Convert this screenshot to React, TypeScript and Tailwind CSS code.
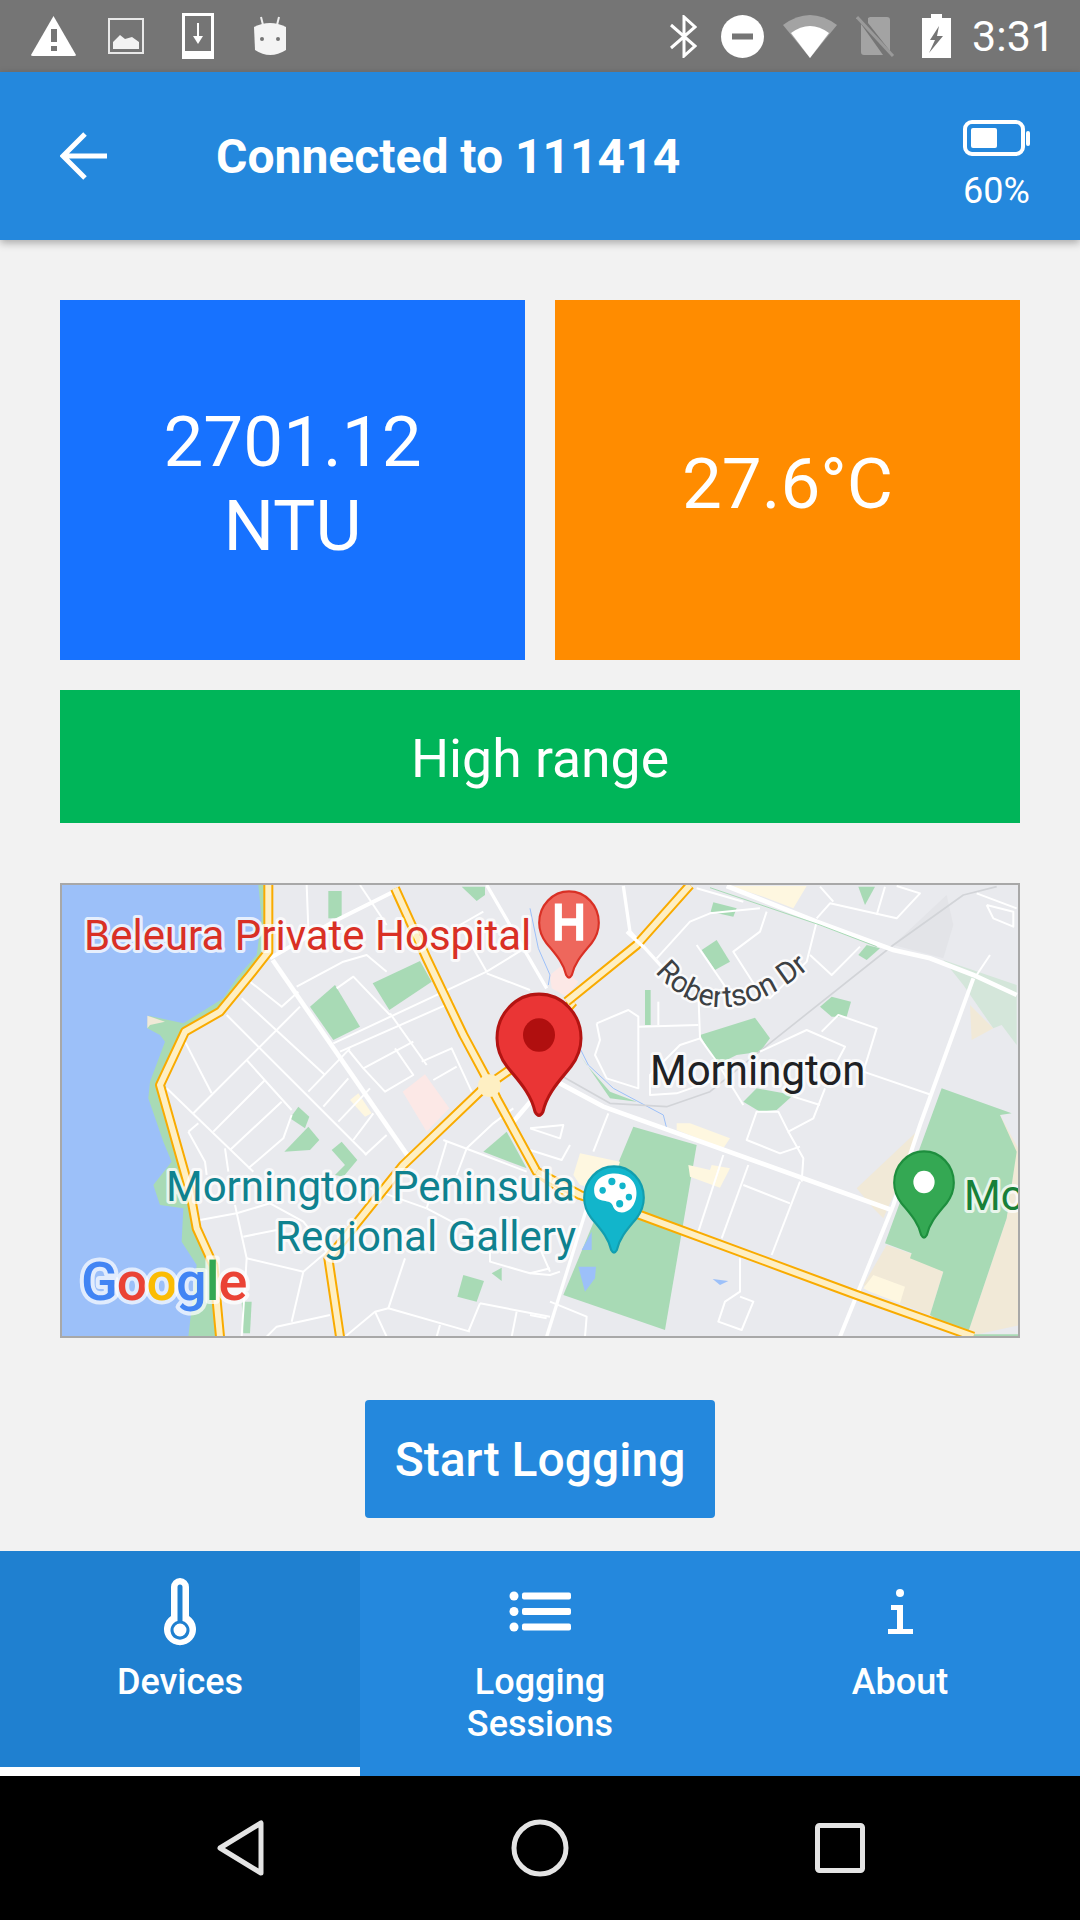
import React from "react";

const thinLeft = [
  "770,30 775,160", "930,30 1010,150", "600,320 695,395 745,350", "575,370 825,600", "530,420 950,840",
  "350,640 610,890", "405,500 485,655", "430,715 750,395", "490,770 645,615", "590,555 725,705",
  "540,825 695,680", "415,770 445,745", "415,770 465,860 470,900", "595,880 700,790 725,720", "525,820 535,890",
  "850,505 1310,290 1440,210", "870,530 1210,380", "895,525 940,580 1090,500", "940,580 1005,650 1090,600 1035,520",
  "1020,415 1130,570", "1115,560 1205,520 1265,650", "1150,615 1220,575", "860,340 910,305 1020,420",
  "740,335 880,260 950,240 1010,290", "1310,295 1440,345", "775,650 900,520", "820,695 895,610", "865,740 960,640",
  "910,795 970,715", "945,840 1010,780", "1180,795 1300,840 1430,890", "1250,820 1330,745 1390,700",
  "450,1035 560,1015 660,985", "580,1085 680,1065", "555,990 590,1150 575,1385", "590,1150 760,1190",
  "725,1340 760,1190 830,1130", "1065,1150 1015,1300", "885,1385 975,1310 1015,1300 1260,1370", "975,1310 1010,1385",
  "650,1385 680,1355 840,1320", "1320,1100 1320,1160 1440,1195 1500,1180", "1290,1285 1255,1370", "1290,1285 1500,1325",
  "1160,1385 1170,1350", "1400,1310 1385,1385", "1190,800 1130,1000", "1250,820 1220,900", "1300,110 1230,150 1310,290",
  "660,985 760,1040 830,1130", "1130,1000 1320,1100", "960,940 1130,1000",
];

const thinRight = [
  "380,250 480,140 540,115 690,100", "500,40 640,80", "710,110 690,170 610,230 680,340 720,370 830,260 860,140",
  "500,210 610,370", "840,240 905,300 990,215", "860,130 900,85 1100,130 1170,55 1100,33", "1040,120 1065,35", "870,35 910,80",
  "200,445 295,405 325,425 325,640 230,610 195,540 210,495 200,445", "325,455 505,450", "385,380 385,450",
  "505,350 510,490 450,510 360,600 360,660 440,655 540,620", "510,490 560,560 640,690",
  "875,470 925,420 1040,460 1000,590 1205,660", "690,530 830,465 945,515 900,600", "885,640 850,730 775,770 745,710 680,710 650,795 750,835 810,815",
  "775,770 820,850 815,920", "790,665 870,690", "235,715 190,830", "0,760 100,750 90,790 0,760", "120,810 95,855 0,825",
  "655,870 575,1090", "580,840 505,1070", "640,930 780,985", "810,920 725,1140", "630,1150 630,1250 585,1280 565,1340 635,1365 670,1280 630,1265",
  "1370,90 1450,110 1450,155 1390,130 1370,90", "1340,55 1460,100", "1380,240 1340,300", "0,1195 60,1200 90,1190", "60,1190 30,1120",
  "60,1280 170,1325 165,1385", "0,1320 50,1330",
];

const wideLeft: [string, number][] = [
  ["668,255 1075,845", 14], ["660,250 850,140 1030,50", 12], ["1310,30 1490,340", 10], ["1390,740 1450,670", 14],
];

const wideRight: [string, number][] = [
  ["590,33 860,140 1090,225 1200,250 1330,300 1460,360", 14], ["80,620 220,695 1085,1005", 14], ["280,33 300,170 400,280", 10],
  ["1330,310 1170,750 1090,990 930,1385", 12], ["170,1000 50,1385", 10],
];

const greensLeft = [
  "835,48 875,48 875,130 835,130", "780,395 855,330 930,455 850,495", "968,325 1110,258 1145,320 1018,405", "1235,35 1305,35 1305,60 1280,78",
  "720,730 745,695 778,725 765,760", "703,830 775,755 808,795 780,825", "845,825 875,800 922,855 880,905 855,900 885,870", "1300,830 1370,770 1430,880",
  "1222,1265 1240,1200 1302,1218 1280,1280", "1325,1195 1355,1178 1355,1218", "575,1280 605,1280 600,1375 580,1375",
];

const greensRight = [
  "510,480 675,428 720,490 690,530 620,540 560,570", "640,680 680,640 790,660 740,705 690,710", "515,225 560,195 600,260 555,285",
  "542,110 550,82 620,100 610,125", "985,35 1035,35 1005,90", "870,395 905,365 963,380 950,425 905,425", "345,345 362,345 362,450 345,450",
  "985,240 1010,210 1050,220 1010,255", "100,1260 310,755 500,810 405,1365",
  "1065,1105 1235,640 1445,715 1410,720 1460,830 1430,1030 1310,1385 1200,1320 1240,1190 1140,1150 1145,1135",
  "150,540 240,670 320,680 240,650 170,570", "1330,1378 1465,1378 1465,1390 1330,1390",
];

const beigeRight = [
  "1320,390 1390,460 1325,495", "980,940 1160,770 1100,940 1060,1030 1030,1000", "1410,720 1470,830 1470,1350 1310,1385 1430,1030",
  "1000,1230 1070,1110 1140,1135 1240,1190 1200,1320 1100,1280",
];

const creamRight = [
  "130,900 150,835 270,860 240,950 150,930", "440,745 480,745 600,790 580,820 440,765", "475,870 540,885 545,870 600,880 570,938 480,905",
  "600,33 830,33 790,100 700,65", "1000,1240 1030,1200 1125,1235 1110,1285 1020,1250",
];

const waterRight = ["145,1175 198,1175 195,1210 165,1250", "155,1125 185,1070 185,1125", "548,1212 595,1218 570,1230"];

const arterialsLeft = [
  "655,30 655,230 600,300 510,410 405,470 330,630 420,950 440,1060 490,1170 510,1385",
  "1035,40 1130,250 1240,480 1310,610 1340,670 1460,890 1560,960",
  "870,1385 835,1150 1060,870 1300,640 1400,570 1570,380",
];

const arterialsRight = ["20,890 150,960 330,1020 980,1260 1330,1385", "110,380 320,210 480,30"];

function Lines({ items, width, color }: { items: string[]; width: number; color: string }) {
  return (
    <>
      {items.map((p, i) => (
        <polyline key={i} points={p} fill="none" stroke={color} strokeWidth={width} strokeLinejoin="round" />
      ))}
    </>
  );
}

function Shapes({ items, color }: { items: string[]; color: string }) {
  return (
    <>
      {items.map((p, i) => (
        <polygon key={i} points={p} fill={color} />
      ))}
    </>
  );
}

function Pin({ x, y, s, fill, edge, children }: { x: number; y: number; s: number; fill: string; edge: string; children?: React.ReactNode }) {
  return (
    <g transform={`translate(${x} ${y}) scale(${s} ${s * 1.05})`}>
      <path
        d="M-4 113C-8 95-22 82-32 70C-40 60-42 52-42 43A42 42 0 1 1 42 43C42 52 40 60 32 70C22 82 8 95 4 113Q0 120-4 113Z"
        fill={fill}
        stroke={edge}
        strokeWidth="3"
        transform="translate(0 1)"
      />
      {children}
    </g>
  );
}

function MapView() {
  const left = "translate(50 875) scale(0.33333)";
  const right = "translate(530 875) scale(0.33333)";
  const label = { fontFamily: "Roboto, sans-serif", paintOrder: "stroke" as const, strokeLinejoin: "round" as const };
  return (
    <svg viewBox="62 885 956 451" className="block w-full h-full bg-[#e9eaee]">
      <g transform={left}>
        <polygon fill="#a8dab5" points="620,30 660,30 660,230 590,310 520,400 405,470 345,630 400,880 440,1080 490,1180 500,1385 400,1385 300,900 280,400" />
        <polygon fill="#9cc0f9" points="0,0 622,0 635,130 620,240 560,310 520,370 400,445 295,422 292,460 330,480 345,500 300,620 295,670 340,800 365,860 310,930 330,990 400,1000 395,1100 440,1170 415,1385 0,1385" />
        <polygon fill="#f1e9d7" points="292,422 345,440 300,450 292,460" />
        <Shapes items={greensLeft} color="#a8dab5" />
        <polygon fill="#fce8e6" points="1058,650 1125,598 1198,700 1130,770" />
        <polygon fill="#fef7e0" points="900,675 925,655 965,715 945,725" />
        <Lines items={thinLeft} width={6} color="#ffffff" />
        {wideLeft.map(([p, w]) => (
          <polyline key={p} points={p} fill="none" stroke="#ffffff" strokeWidth={w} />
        ))}
      </g>
      <g transform={right}>
        <Shapes items={beigeRight} color="#f1e9d7" />
        <polygon fill="#d4e6da" points="1240,255 1460,330 1460,510 1415,450 1390,460 1300,330" />
        <Shapes items={greensRight} color="#a8dab5" />
        <polygon fill="#fce8e6" points="60,300 90,275 145,320 110,365 65,340" />
        <polygon fill="#e3e4e8" points="1250,60 1270,150 1240,250 1090,210" />
        <Shapes items={creamRight} color="#fef7e0" />
        <Shapes items={waterRight} color="#9cc0f9" />
        <Lines items={["0,100 25,220 60,300 55,330", "150,520 175,570 250,640 400,720 410,760"]} width={3} color="#9cc0f9" />
        <Lines items={["90,600 240,685 410,695 540,650 700,520 1090,210 1300,60 1400,35"]} width={5} color="#d2d4d8" />
        <Lines items={thinRight} width={6} color="#ffffff" />
        {wideRight.map(([p, w]) => (
          <polyline key={p} points={p} fill="none" stroke="#ffffff" strokeWidth={w} />
        ))}
        <Lines items={["540,38 870,150 1040,215"]} width={3} color="#a8dab5" />
      </g>
      <g transform={left}>
        <Lines items={arterialsLeft} width={30} color="#f9ab00" />
        <Lines items={arterialsLeft} width={18} color="#feefc3" />
        <circle cx="1318" cy="632" r="34" fill="#feefc3" />
      </g>
      <g transform={right}>
        <Lines items={arterialsRight} width={30} color="#f9ab00" />
        <Lines items={arterialsRight} width={18} color="#feefc3" />
        <Lines items={["290,170 340,215"]} width={10} color="#ffffff" />
      </g>

      <text x="84" y="950" fontSize="42" fill="#d93025" stroke="#ffffff" strokeOpacity="0.75" strokeWidth="6" style={label}>Beleura Private Hospital</text>
      <text x="166" y="1201" fontSize="42" fill="#0f828f" stroke="#ffffff" strokeOpacity="0.75" strokeWidth="6" style={label}>Mornington Peninsula</text>
      <text x="275" y="1251" fontSize="42" fill="#0f828f" stroke="#ffffff" strokeOpacity="0.75" strokeWidth="6" style={label}>Regional Gallery</text>
      <text x="650" y="1085" fontSize="42" fill="#202124" stroke="#ffffff" strokeOpacity="0.75" strokeWidth="6" style={label}>Mornington</text>
      <text x="964" y="1210" fontSize="42" fill="#188038" stroke="#ffffff" strokeOpacity="0.75" strokeWidth="6" style={label}>Mo</text>
      <path id="robertson" d="M655 972Q722 1050 824 955" fill="none" />
      <text fontSize="30" fill="#3c4043" stroke="#ffffff" strokeOpacity="0.8" strokeWidth="5" style={label}>
        <textPath href="#robertson">Robertson Dr</textPath>
      </text>

      <text x="81" y="1300" fontSize="54" fontWeight="500" stroke="#ffffff" strokeOpacity="0.7" strokeWidth="8" letterSpacing="-1" style={label}>
        <tspan fill="#4285f4">G</tspan>
        <tspan fill="#ea4335">o</tspan>
        <tspan fill="#fbbc04">o</tspan>
        <tspan fill="#4285f4">g</tspan>
        <tspan fill="#34a853">l</tspan>
        <tspan fill="#ea4335">e</tspan>
      </text>

      <Pin x={569} y={890} s={0.71} fill="#ee675c" edge="#d93025">
        <path d="M-20 18H-10V38H10V18H20V68H10V48H-10V68H-20Z" fill="#ffffff" />
      </Pin>
      <Pin x={614} y={1165} s={0.71} fill="#12b5cb" edge="#129eaf">
        <path d="M-28 34C-28 12 2 6 20 16C36 26 34 48 24 58C16 66 2 66-2 54C-6 44-28 54-28 34Z" fill="#ffffff" />
        <circle cx="-16" cy="34" r="4.5" fill="#12b5cb" />
        <circle cx="-3" cy="22" r="5" fill="#12b5cb" />
        <circle cx="12" cy="28" r="4.5" fill="#12b5cb" />
        <circle cx="21" cy="43" r="4.5" fill="#12b5cb" />
        <circle cx="8" cy="52" r="5" fill="#12b5cb" />
      </Pin>
      <Pin x={924} y={1150} s={0.71} fill="#34a853" edge="#1e8e3e">
        <circle cx="0" cy="43" r="15" fill="#ffffff" />
      </Pin>
      <Pin x={539} y={992} s={1} fill="#ea3535" edge="#b31412">
        <circle cx="0" cy="41" r="16" fill="#b00f0f" />
      </Pin>
    </svg>
  );
}

function StatusBar() {
  return (
    <div className="flex h-[72px] items-center bg-[#757575] pl-[31px] pr-[25px]">
      <svg width="45" height="40" viewBox="0 0 45 40">
        <path d="M22.500 0L45 39Q45 40 43 40H2Q0 40 0 39Z" fill="#ffffff" />
        <rect x="20" y="13" width="6" height="13" fill="#757575" />
        <rect x="20" y="30" width="6" height="5" fill="#757575" />
      </svg>
      <svg className="ml-[32px]" width="36" height="36" viewBox="0 0 36 36">
        <rect x="1" y="1" width="34" height="34" fill="none" stroke="#e8e8e8" strokeWidth="2" />
        <path d="M5 31V24L12 17L17 21L24 19L31 24V31Z" fill="#f2f2f2" />
      </svg>
      <svg className="ml-[38px]" width="32" height="46" viewBox="0 0 32 46">
        <path fillRule="evenodd" d="M0 0H32V46H0ZM3 3V38H29V3Z" fill="#ffffff" />
        <path d="M15 10H17V23H21L16 31L11 23H15Z" fill="#ffffff" />
      </svg>
      <svg className="ml-[39px]" width="34" height="40" viewBox="0 0 34 40">
        <path d="M8 1L10 9M26 1L24 9" stroke="#eeeeee" strokeWidth="2" />
        <path d="M1 11Q17 3 33 11V34Q17 44 2 34Z" fill="#f4f4f4" />
        <circle cx="9" cy="23" r="2" fill="#757575" />
        <circle cx="25" cy="23" r="2" fill="#757575" />
      </svg>
      <svg className="ml-auto" width="27" height="43" viewBox="0 0 27 43">
        <path d="M1 10L25 31L14 41V2L25 12L1 33" fill="none" stroke="#ffffff" strokeWidth="3" />
      </svg>
      <svg className="ml-[24px]" width="43" height="43" viewBox="0 0 43 43">
        <circle cx="21.500" cy="21.500" r="21.500" fill="#ffffff" />
        <rect x="11" y="18.500" width="21" height="6" fill="#757575" />
      </svg>
      <svg className="ml-[19px]" width="54" height="43" viewBox="0 0 54 43">
        <path d="M0 10Q27-10 54 10L27 43Z" fill="#a3a3a3" />
        <path d="M8 18Q27 4 46 18L27 43Z" fill="#ffffff" />
      </svg>
      <svg className="ml-[19px]" width="39" height="42" viewBox="0 0 39 42">
        <path d="M14 2H31Q34 2 34 5V36L12 8V3ZM5 9L27 40H8Q5 40 5 37Z" fill="#a3a3a3" />
        <path d="M1 2L37 41" stroke="#9a9a9a" strokeWidth="3" />
      </svg>
      <svg className="ml-[27px]" width="29" height="44" viewBox="0 0 29 44">
        <path fillRule="evenodd" d="M9 0H20V4H29V44H0V4H9ZM17 12L8 26H13L7 39L21 22H15Z" fill="#ffffff" />
      </svg>
      <span className="ml-[21px] text-[43px] leading-none text-white">3:31</span>
    </div>
  );
}

function Header() {
  return (
    <div className="relative z-10 flex h-[168px] items-center bg-[#2488dd] pl-[60px] pr-[50px] shadow-[0_3px_8px_rgba(0,0,0,0.3)]">
      <svg width="48" height="48" viewBox="0 0 48 48">
        <path d="M47 24H3M25 2L3 24L25 46" fill="none" stroke="#ffffff" strokeWidth="5" />
      </svg>
      <span className="ml-[108px] pt-[2px] text-[48px] font-bold text-white">Connected to 111414</span>
      <div className="ml-auto flex w-[67px] flex-col items-center self-start pt-[48px]">
        <svg width="67" height="36" viewBox="0 0 67 36">
          <rect x="2" y="2" width="58" height="32" rx="7" fill="none" stroke="#ffffff" strokeWidth="4" />
          <rect x="8" y="8" width="26" height="20" rx="2" fill="#ffffff" />
          <rect x="63" y="11" width="4" height="15" rx="2" fill="#ffffff" />
        </svg>
        <span className="mt-[12px] text-[36px] leading-[46px] text-white">60%</span>
      </div>
    </div>
  );
}

function Tab({ label, active, children }: { label: string; active?: boolean; children: React.ReactNode }) {
  return (
    <div className={active ? "flex flex-1 flex-col items-center bg-[#1f80d0] border-b-[9px] border-white" : "flex flex-1 flex-col items-center"}>
      <div className="flex h-[100px] items-end justify-center pb-[5px]">{children}</div>
      <span className="mt-[10px] w-[200px] text-center text-[36px] font-medium leading-[42px] text-white">{label}</span>
    </div>
  );
}

export default function App() {
  return (
    <div className="flex h-[1920px] w-[1080px] flex-col overflow-hidden bg-[#f2f2f2] font-['Roboto',sans-serif]">
      <StatusBar />
      <Header />
      <div className="flex flex-1 flex-col px-[60px] pt-[60px]">
        <div className="grid grid-cols-2 gap-[30px]">
          <div className="flex h-[360px] items-center justify-center bg-[#1772ff] pt-[7px] text-center text-[71px] leading-[84px] text-white">
            2701.12
            <br />
            NTU
          </div>
          <div className="flex h-[360px] items-center justify-center bg-[#ff8c00] pt-[9px] text-[71px] text-white">27.6°C</div>
        </div>
        <div className="mt-[30px] flex h-[133px] items-center justify-center bg-[#00b559] pt-[6px] text-[53.5px] text-white">High range</div>
        <div className="mt-[60px] h-[455px] border-2 border-[#a8a8a8]">
          <MapView />
        </div>
        <div className="mt-[62px] flex h-[118px] w-[350px] items-center justify-center self-center rounded-[4px] bg-[#2488dd] pt-[2px] text-[48px] font-medium text-white">
          Start Logging
        </div>
      </div>
      <div className="flex h-[225px] bg-[#2488dd]">
        <Tab label="Devices" active>
          <svg width="32" height="68" viewBox="0 0 32 68">
            <path
              fillRule="evenodd"
              d="M7 9A9 9 0 0 1 25 9V38A16 16 0 1 1 7 38ZM13.500 9V43A9.500 9.500 0 1 0 18.500 43V9A2.500 2.500 0 0 0 13.500 9ZM16 45.500A6.500 6.500 0 1 1 16 58.500A6.500 6.500 0 1 1 16 45.500Z"
              fill="#ffffff"
            />
          </svg>
        </Tab>
        <Tab label="Logging Sessions">
          <svg className="mb-[14px]" width="62" height="41" viewBox="0 0 62 41">
            <circle cx="5" cy="5" r="4.500" fill="#ffffff" />
            <circle cx="5" cy="20.500" r="4.500" fill="#ffffff" />
            <circle cx="5" cy="36" r="4.500" fill="#ffffff" />
            <rect x="13" y="1.500" width="49" height="7" rx="2" fill="#ffffff" />
            <rect x="13" y="17" width="49" height="7" rx="2" fill="#ffffff" />
            <rect x="13" y="32.500" width="49" height="7" rx="2" fill="#ffffff" />
          </svg>
        </Tab>
        <Tab label="About">
          <svg className="mb-[11px]" width="25" height="46" viewBox="0 0 25 46">
            <circle cx="12" cy="4" r="4" fill="#ffffff" />
            <path d="M3 16H15V40H25V45H0V40H9V21H3Z" fill="#ffffff" />
          </svg>
        </Tab>
      </div>
      <div className="flex h-[144px] items-center justify-center gap-[246px] bg-black pl-[2px]">
        <svg width="48" height="58" viewBox="0 0 48 58">
          <path d="M44 4V54L3 29Z" fill="none" stroke="#e4e4e4" strokeWidth="5" strokeLinejoin="round" />
        </svg>
        <svg width="58" height="58" viewBox="0 0 58 58">
          <circle cx="29" cy="29" r="26" fill="none" stroke="#e4e4e4" strokeWidth="5" />
        </svg>
        <svg width="50" height="50" viewBox="0 0 50 50">
          <rect x="2.500" y="2.500" width="45" height="45" rx="2" fill="none" stroke="#e4e4e4" strokeWidth="5" />
        </svg>
      </div>
    </div>
  );
}
